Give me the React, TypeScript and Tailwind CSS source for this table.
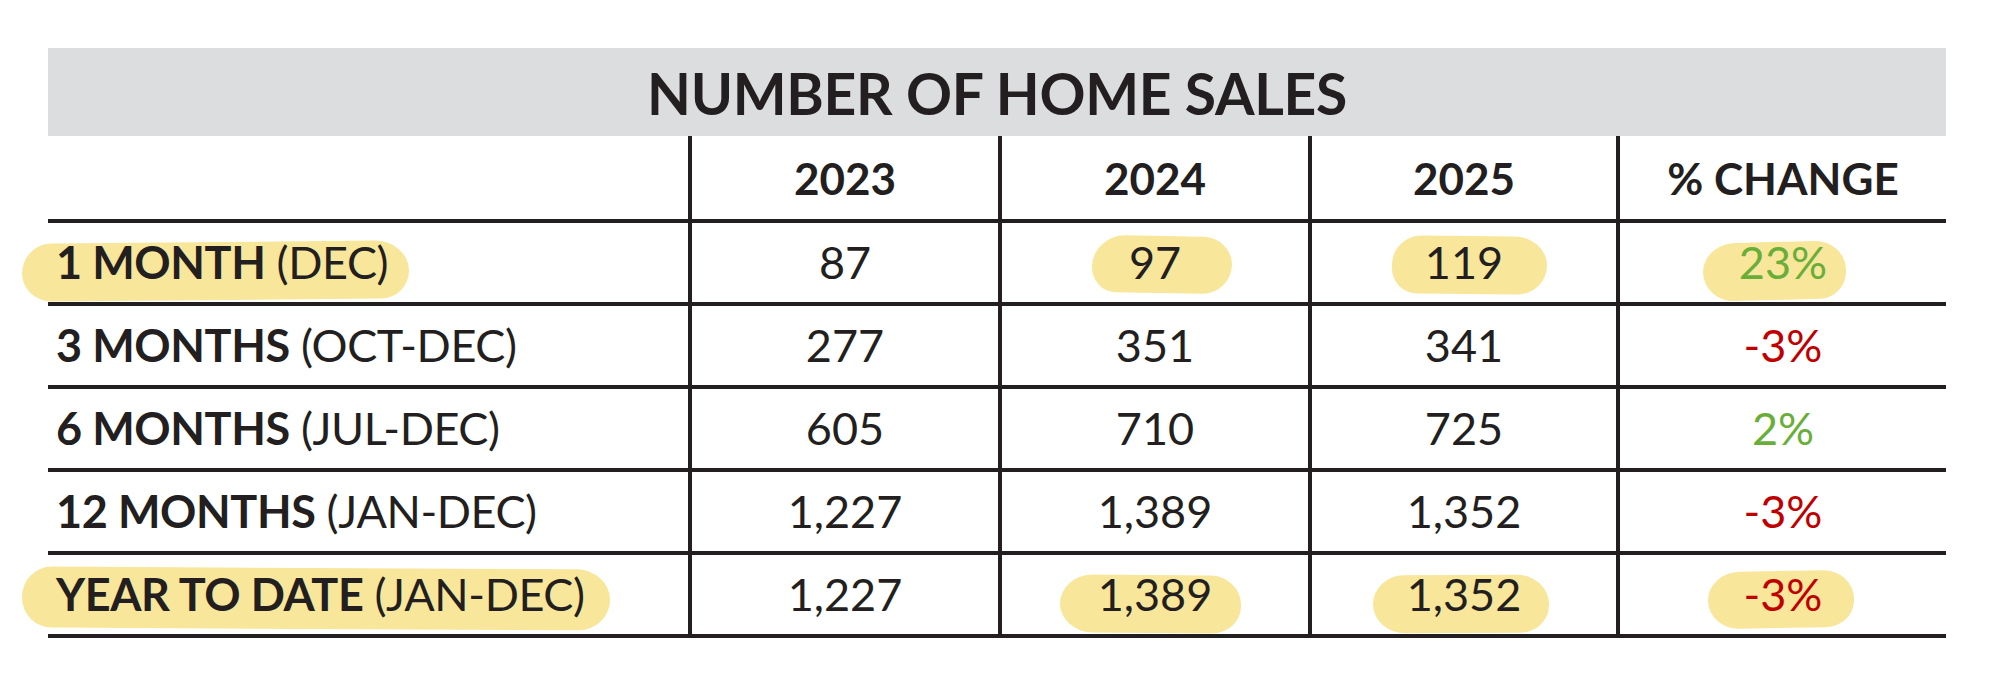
import React from "react";

type Row = {
  bold: string;
  rest: string;
  labelHl?: string;
  vals: { text: string; hl?: string; color?: string }[];
};

const rows: Row[] = [
  {
    bold: "1 MONTH",
    rest: "(DEC)",
    labelHl: "left-[-26px] top-[19px] w-[387px] h-[58px] rounded-[30px_34px_28px_30px/30px_30px_28px_28px] -rotate-[0.5deg]",
    vals: [
      { text: "87" },
      { text: "97", hl: "left-[90px] top-[13px] w-[140px] h-[57px] rounded-[34px_30px_30px_24px/32px_28px_30px_26px] rotate-[1deg]" },
      { text: "119", hl: "left-[80px] top-[13px] w-[155px] h-[58px] rounded-[30px_34px_30px_26px/30px_30px_30px_26px] rotate-[0.5deg]" },
      { text: "23%", color: "text-[#6aae3a]", hl: "left-[83px] top-[19px] w-[143px] h-[58px] rounded-[34px_32px_28px_32px/30px_30px_28px_30px] -rotate-[1.5deg]" },
    ],
  },
  {
    bold: "3 MONTHS",
    rest: "(OCT-DEC)",
    vals: [{ text: "277" }, { text: "351" }, { text: "341" }, { text: "-3%", color: "text-[#c00000]" }],
  },
  {
    bold: "6 MONTHS",
    rest: "(JUL-DEC)",
    vals: [{ text: "605" }, { text: "710" }, { text: "725" }, { text: "2%", color: "text-[#6aae3a]" }],
  },
  {
    bold: "12 MONTHS",
    rest: "(JAN-DEC)",
    vals: [{ text: "1,227" }, { text: "1,389" }, { text: "1,352" }, { text: "-3%", color: "text-[#c00000]" }],
  },
  {
    bold: "YEAR TO DATE",
    rest: "(JAN-DEC)",
    labelHl: "left-[-26px] top-[13px] w-[588px] h-[61px] rounded-[30px_34px_32px_30px/30px_30px_30px_30px] rotate-[0.3deg]",
    vals: [
      { text: "1,227" },
      { text: "1,389", hl: "left-[58px] top-[20px] w-[181px] h-[58px] rounded-[34px_32px_30px_34px/30px_30px_28px_30px] rotate-[0.5deg]" },
      { text: "1,352", hl: "left-[61px] top-[20px] w-[176px] h-[58px] rounded-[32px_34px_30px_34px/30px_30px_28px_30px] -rotate-[0.3deg]" },
      { text: "-3%", color: "text-[#c00000]", hl: "left-[88px] top-[16px] w-[146px] h-[57px] rounded-[34px_32px_30px_32px/30px_30px_28px_30px] -rotate-[1deg]" },
    ],
  },
];

const font = { fontFamily: "Lato, 'Open Sans', sans-serif" };

export default function App() {
  return (
    <div className="w-[2000px] h-[692px] bg-white text-[#231f20]" style={font}>
      <div className="pt-[48px] pl-[48px]">
        <div className="w-[1898px]">
          <div className="h-[88px] bg-[#dcdddf] flex items-center justify-center">
            <span className="text-[57px] font-bold leading-none tracking-[-0.3px] pt-[2px]">NUMBER OF HOME SALES</span>
          </div>
          <div className="grid grid-cols-[640px_310px_310px_308px_330px]">
            <div className="h-[87px] border-b-4 border-[#231f20]" />
            {["2023", "2024", "2025", "% CHANGE"].map((h) => (
              <div
                key={h}
                className="h-[87px] border-b-4 border-l-4 border-[#231f20] flex items-center justify-center text-[44px] font-bold leading-none"
              >
                {h}
              </div>
            ))}
            {rows.map((r, i) => (
              <React.Fragment key={i}>
                <div className="relative h-[83px] border-b-4 border-[#231f20] flex items-center pl-[8px]">
                  {r.labelHl && <span className={"absolute bg-[#f8e69b] " + r.labelHl} />}
                  <span className="relative text-[45px] leading-none whitespace-nowrap tracking-[-0.4px]">
                    <span className="font-bold">{r.bold}</span> <span className="font-normal">{r.rest}</span>
                  </span>
                </div>
                {r.vals.map((v, j) => (
                  <div
                    key={j}
                    className="relative h-[83px] border-b-4 border-l-4 border-[#231f20] flex items-center justify-center"
                  >
                    {v.hl && <span className={"absolute bg-[#f8e69b] " + v.hl} />}
                    <span className={"relative text-[45px] leading-none " + (v.color ?? "")}>{v.text}</span>
                  </div>
                ))}
              </React.Fragment>
            ))}
          </div>
        </div>
      </div>
    </div>
  );
}
